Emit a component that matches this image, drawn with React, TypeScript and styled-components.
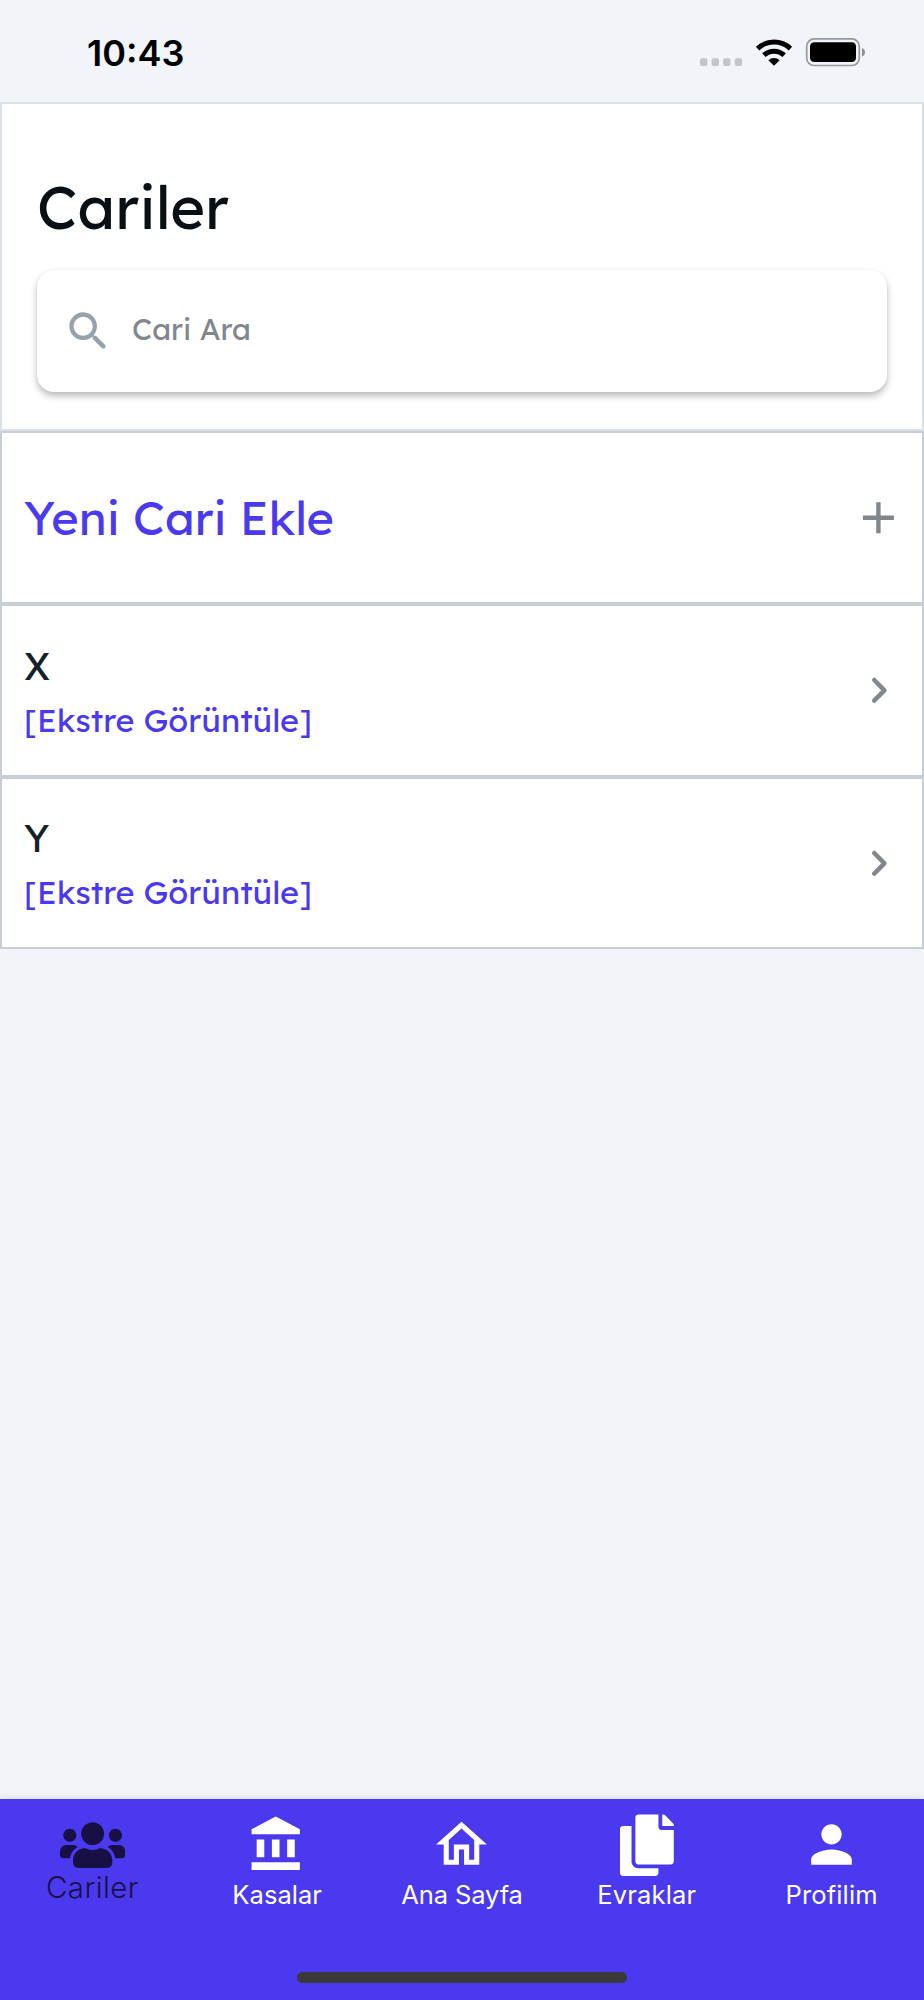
import React from "react";
import styled, { createGlobalStyle, css } from "styled-components";
import { FaUsers, FaCopy } from "react-icons/fa";
import { MdOutlineHome, MdPerson } from "react-icons/md";

const GlobalStyle = createGlobalStyle`
  * { box-sizing: border-box; }
  body { margin: 0; background: #f1f4f8; font-family: Inter, "Liberation Sans", sans-serif; }
  svg { display: block; flex: none; }
`;

/* Geometric look for the page content; Inter falls back with its single-storey "a" */
const geometric = css`
  font-family: Lexend, Inter, "Liberation Sans", sans-serif;
  font-feature-settings: "cv11" 1;
`;

const Screen = styled.div`
  display: flex;
  flex-direction: column;
  width: 924px;
  height: 2000px;
  overflow: hidden;
  background: #f1f4f8;
`;

const StatusBar = styled.header`
  display: flex;
  justify-content: space-between;
  flex: none;
  height: 102px;
  padding: 33px 59px 0 87px;
`;

const Clock = styled.div`
  height: 40px;
  font-size: 36px;
  line-height: 40px;
  font-weight: 600;
  color: #000;
`;

const SearchHeader = styled.section`
  flex: none;
  height: 329px;
  padding: 73px 35px 0;
  border: 2px solid #dbe2e7;
  background: #fff;
`;

const Title = styled.h1`
  ${geometric}
  margin: 0 0 33px;
  font-size: 59.6px;
  line-height: 60px;
  height: 60px;
  font-weight: 400;
  color: #090f13;
`;

const SearchBox = styled.div`
  display: flex;
  align-items: center;
  gap: 18px;
  height: 122px;
  padding-left: 26px;
  border-radius: 17px;
  background: #fff;
  box-shadow: 0 4px 7px rgba(0, 0, 0, 0.27), 0 0 2px rgba(0, 0, 0, 0.06);
`;

const Placeholder = styled.span`
  ${geometric}
  padding-bottom: 5px;
  font-size: 29.8px;
  line-height: 40px;
  font-weight: 400;
  color: #82878c;
`;

const Row = styled.div`
  display: flex;
  justify-content: space-between;
  align-items: center;
  flex: none;
  height: 172.8px;
  padding: 0 20px 0 22px;
  border: 2px solid #c8ced5;
  background: #fff;
`;

const AddLabel = styled.span`
  ${geometric}
  padding-top: 1px;
  font-size: 47px;
  line-height: 60px;
  color: #4b39ef;
`;

const Account = styled.div`
  ${geometric}
  display: flex;
  flex-direction: column;
  padding-top: 6px;
`;

const AccountName = styled.span`
  font-size: 38.3px;
  line-height: 54px;
  color: #14212b;
`;

const StatementLink = styled.span`
  font-size: 32.4px;
  line-height: 55px;
  color: #4b39ef;
`;

const TabBar = styled.nav`
  display: flex;
  flex-direction: column;
  justify-content: space-between;
  align-items: center;
  flex: none;
  height: 201px;
  margin-top: auto;
  padding-bottom: 17px;
  background: #4b39ef;
  box-shadow: 0 0 8px rgba(0, 0, 0, 0.12);
`;

const Tabs = styled.div`
  display: grid;
  grid-template-columns: repeat(5, 1fr);
  width: 100%;
`;

const Tab = styled.div<{ $active?: boolean }>`
  display: flex;
  flex-direction: column;
  align-items: center;
  padding-top: ${(p) => (p.$active ? 19.5 : 15)}px;
  color: ${(p) => (p.$active ? "#181045" : "#fff")};
`;

const TabIcon = styled.span<{ $slot: number; $w: number; $h: number }>`
  height: ${(p) => p.$slot}px;
  svg {
    width: ${(p) => p.$w}px;
    height: ${(p) => p.$h}px;
  }
`;

const TabLabel = styled.span<{ $active?: boolean; $spacing: number }>`
  margin-top: ${(p) => (p.$active ? 0 : 2)}px;
  font-size: ${(p) => (p.$active ? 29.5 : 25.5)}px;
  line-height: 34px;
  font-weight: ${(p) => (p.$active ? 300 : 400)};
  letter-spacing: ${(p) => p.$spacing}px;
  white-space: nowrap;
`;

const HomeIndicator = styled.div`
  width: 330px;
  height: 11px;
  border-radius: 6px;
  background: #3a3a3a;
`;

const StatusIcons = () => (
  <svg width="166" height="36" viewBox="699 33 166 36">
    {[700, 711.6, 723.1, 734.7].map((x) => (
      <rect key={x} x={x} y="58.2" width="7.4" height="7.8" rx="2" fill="#c3c4c8" />
    ))}
    <path d="M774 65.8 L768.3 60.2 A8.2 8.2 0 0 1 779.7 60.2 Z" fill="#000" />
    <g fill="none" stroke="#000" strokeWidth="5">
      <path d="M763.8 55.2 A15 15 0 0 1 784.2 55.2" />
      <path d="M757.6 48.6 A23.8 23.8 0 0 1 790.4 48.6" />
    </g>
    <rect x="806.7" y="38.9" width="52.6" height="26.6" rx="7.5" fill="none" stroke="#96989c" strokeWidth="1.7" />
    <rect x="810" y="42.3" width="46" height="19.8" rx="4.2" fill="#000" />
    <path d="M862 48 Q865 49 865 52.2 Q865 55.4 862 56.4 Z" fill="#8e9094" />
  </svg>
);

const SearchIcon = () => (
  <svg width="51" height="51" viewBox="0 0 24 24" fill="#95a1ac">
    <path d="M15.5 14h-.79l-.28-.27c1.2-1.4 1.82-3.31 1.48-5.34-.47-2.78-2.79-5-5.59-5.34-4.23-.52-7.79 3.04-7.27 7.27.34 2.8 2.56 5.12 5.34 5.59 2.03.34 3.94-.28 5.34-1.48l.27.28v.79l4.25 4.25c.41.41 1.08.41 1.49 0 .41-.41.41-1.08 0-1.49L15.5 14zm-6 0C7.01 14 5 11.99 5 9.5S7.01 5 9.5 5 14 7.01 14 9.5 11.99 14 9.5 14z" />
  </svg>
);

const PlusIcon = () => (
  <svg width="46" height="46" viewBox="0 0 46 46" stroke="#82878c" strokeWidth="4.4">
    <path d="M6.9 23.8h31M22.4 8.3v31" />
  </svg>
);

const ChevronIcon = () => (
  <svg width="46" height="46" viewBox="0 0 46 46" fill="none" stroke="#82878c" strokeWidth="4.5" strokeLinecap="round">
    <path d="M18.2 13L28.4 23.3L18.2 33.6" strokeLinejoin="round" />
  </svg>
);

const BankIcon = () => (
  <svg viewBox="0.2 0 24 24" fill="currentColor">
    <path d="M4 10v7h3v-7H4zm6 0v7h3v-7h-3zM2 22h19v-3H2v3zm14-12v7h3v-7h-3zm-4.5-9L2 6v2h19V6l-9.5-5z" />
  </svg>
);

const accounts = ["X", "Y"];

const tabs = [
  { label: "Cariler", icon: <FaUsers />, w: 65.3, h: 52.2, slot: 51, spacing: 0.4, active: true },
  { label: "Kasalar", icon: <BankIcon />, w: 61, h: 61, slot: 62, spacing: 0.05 },
  { label: "Ana Sayfa", icon: <MdOutlineHome />, w: 61, h: 61, slot: 62, spacing: -0.1 },
  { label: "Evraklar", icon: <FaCopy />, w: 53.8, h: 62.5, slot: 62, spacing: 0.15 },
  { label: "Profilim", icon: <MdPerson />, w: 61, h: 61, slot: 62, spacing: 0.15 },
];

export default function App() {
  return (
    <Screen>
      <GlobalStyle />
      <StatusBar>
        <Clock>10:43</Clock>
        <StatusIcons />
      </StatusBar>
      <SearchHeader>
        <Title>Cariler</Title>
        <SearchBox>
          <SearchIcon />
          <Placeholder>Cari Ara</Placeholder>
        </SearchBox>
      </SearchHeader>
      <Row>
        <AddLabel>Yeni Cari Ekle</AddLabel>
        <PlusIcon />
      </Row>
      {accounts.map((name) => (
        <Row key={name}>
          <Account>
            <AccountName>{name}</AccountName>
            <StatementLink>[Ekstre Görüntüle]</StatementLink>
          </Account>
          <ChevronIcon />
        </Row>
      ))}
      <TabBar>
        <Tabs>
          {tabs.map((t) => (
            <Tab key={t.label} $active={t.active}>
              <TabIcon $slot={t.slot} $w={t.w} $h={t.h}>{t.icon}</TabIcon>
              <TabLabel $active={t.active} $spacing={t.spacing}>{t.label}</TabLabel>
            </Tab>
          ))}
        </Tabs>
        <HomeIndicator />
      </TabBar>
    </Screen>
  );
}
